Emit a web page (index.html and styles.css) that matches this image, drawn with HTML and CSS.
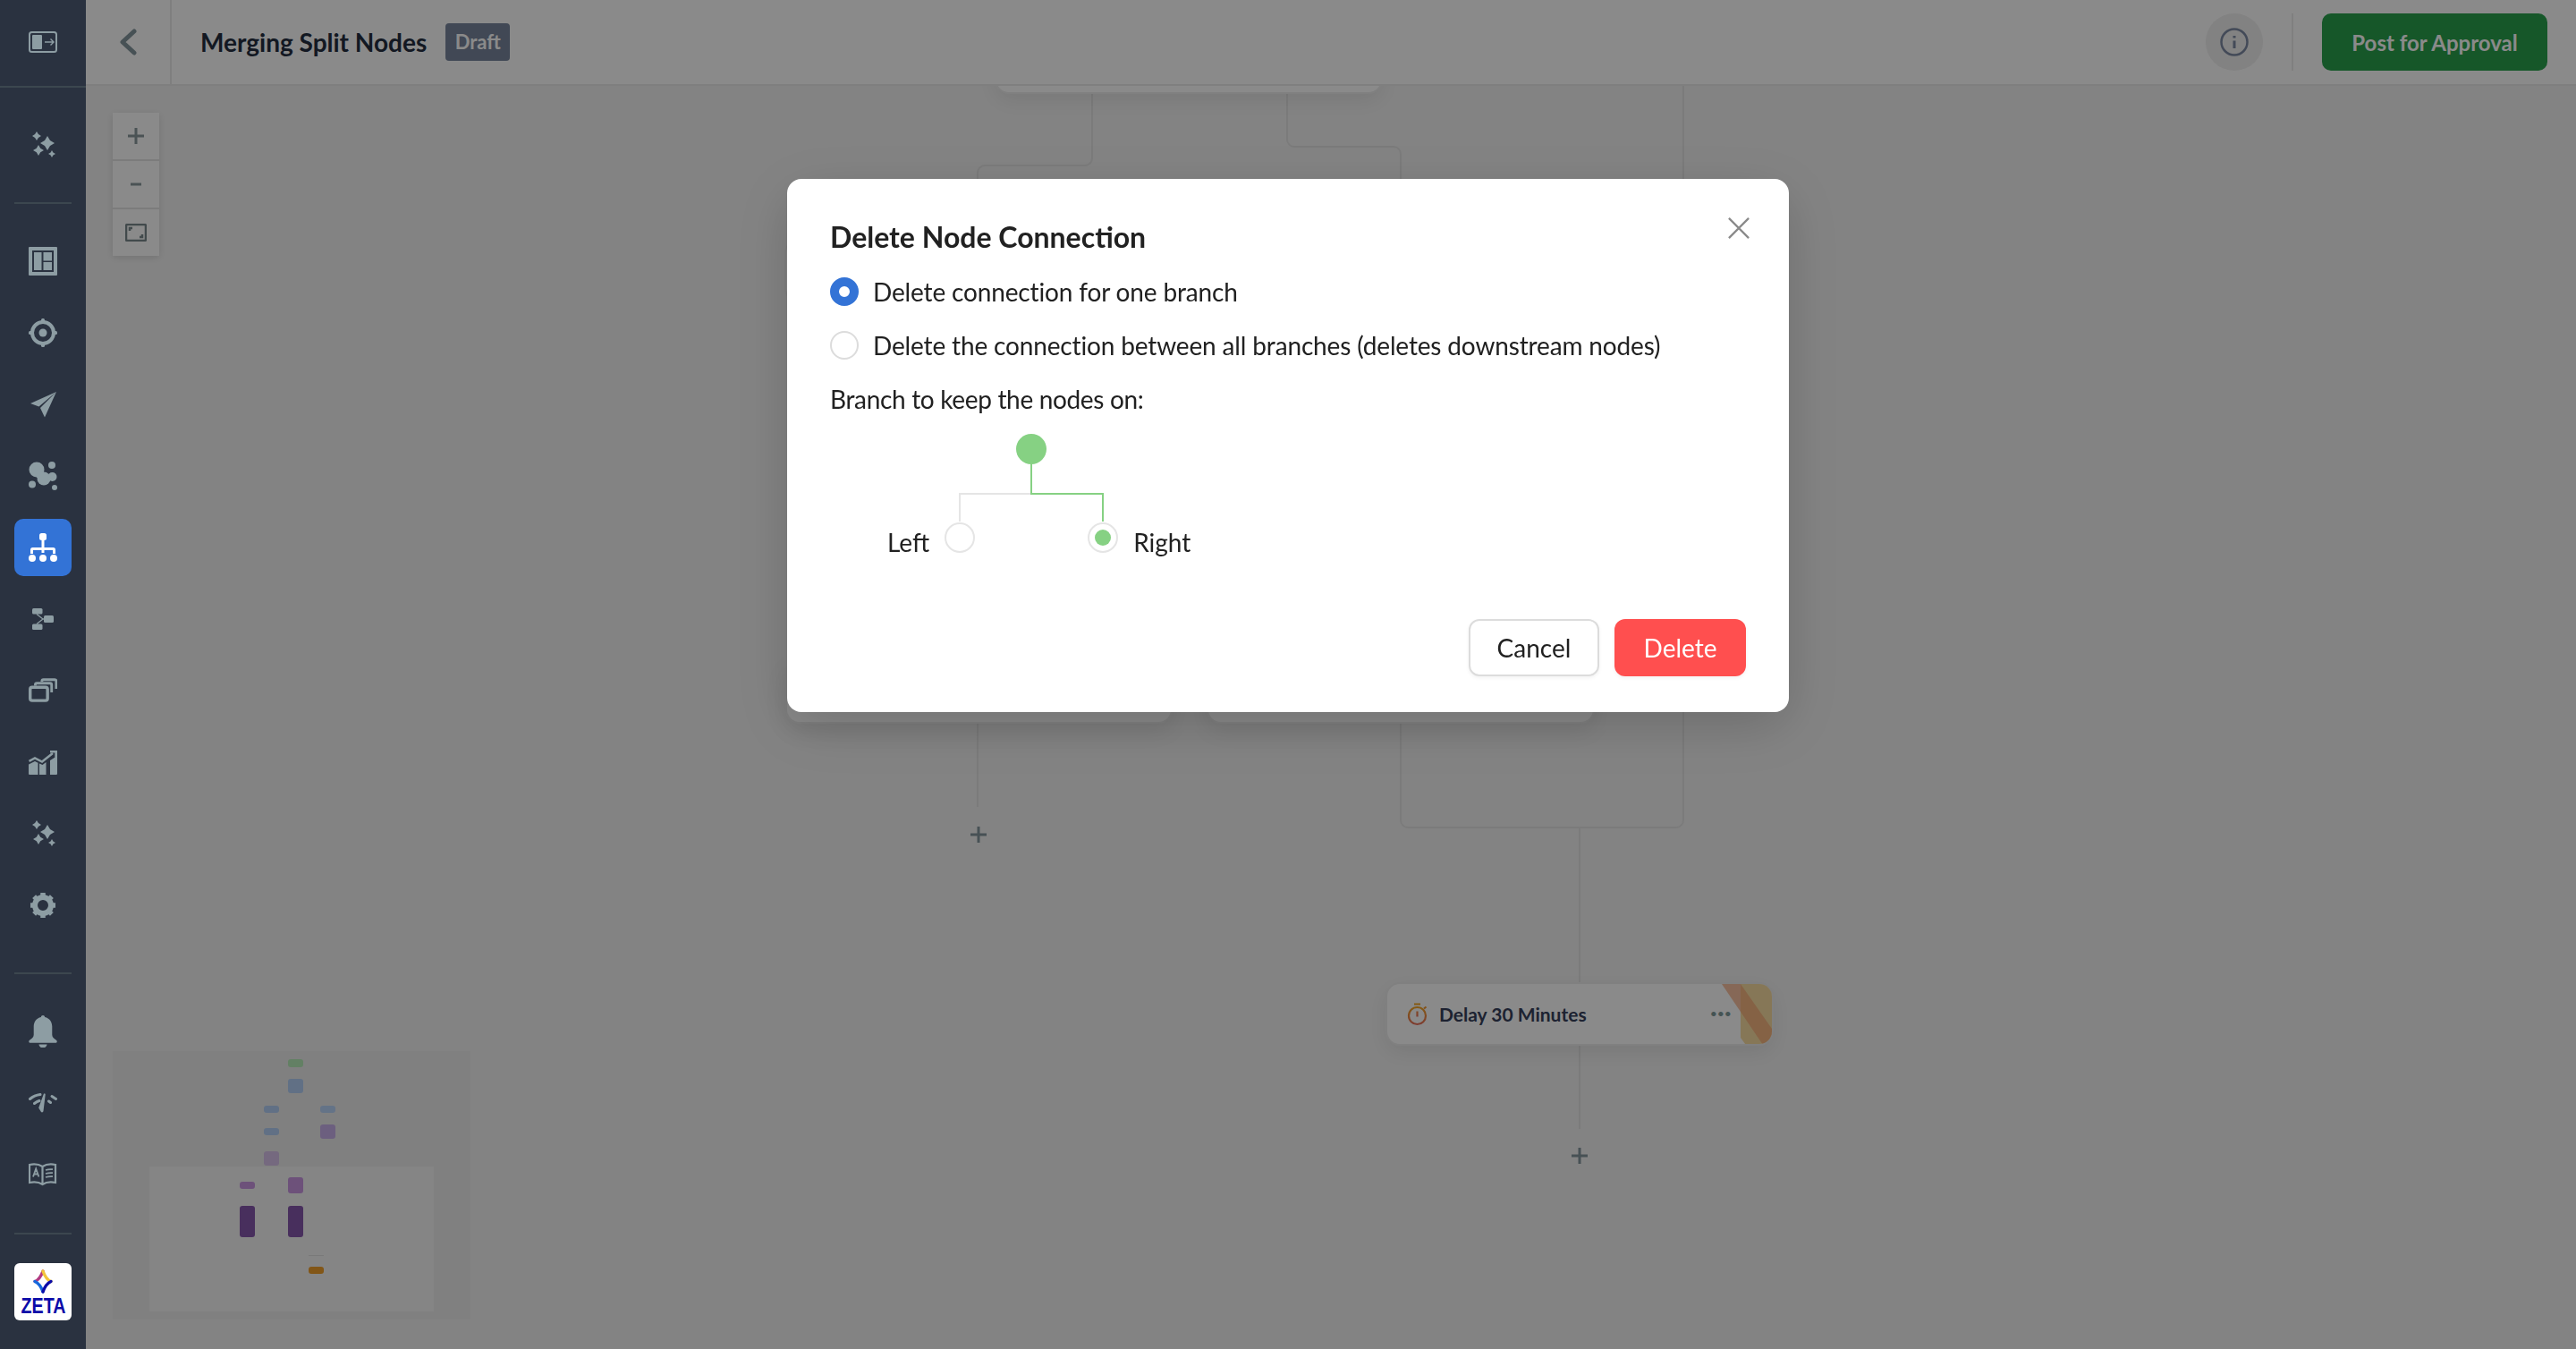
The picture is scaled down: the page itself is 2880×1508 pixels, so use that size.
FILE: index.html
```html
<!DOCTYPE html>
<html lang="en">

<head>
    <meta charset="UTF-8">
    <meta name="viewport" content="width=device-width, initial-scale=1.0">
    <title>Merging Split Nodes</title>
    <link rel="stylesheet" href="styles.css">
</head>

<body>
    <div class="app">
        <aside class="sidebar">
            <div class="side-top">
                <svg class="icon" viewBox="0 0 32 24"><rect class="line" x="1" y="1" width="30" height="22" rx="2.5" stroke-width="2"/><rect x="4" y="4" width="11" height="16" rx="1"/><path class="line" stroke-width="1.4" d="M18 12h10M24.500 8.500 28 12l-3.500 3.500"/></svg>
            </div>
            <div class="side-item side-first">
                <svg class="icon" viewBox="0 0 32 32"><path d="M21 6l3 5 5 3-5 3-3 5-3-5-5-3 5-3ZM9 1l1.900 3.100L14 6l-3.100 1.900L9 11 7.100 7.900 4 6l3.100-1.900ZM11 16l2.200 3.800L17 22l-3.800 2.200L11 28l-2.200-3.800L5 22l3.800-2.200ZM26 22l1.400 2.600L30 26l-2.600 1.400L26 30l-1.400-2.600L22 26l2.600-1.400Z"/></svg>
            </div>
            <div class="side-rule"></div>
            <nav class="side-group">
                <div class="side-item">
                    <svg class="icon" viewBox="0 0 32 32"><path fill-rule="evenodd" d="M1 0h30a1 1 0 0 1 1 1v30a1 1 0 0 1-1 1H1a1 1 0 0 1-1-1V1a1 1 0 0 1 1-1Zm3 4v24h24V4H4Z"/><rect x="6" y="6" width="8.500" height="20"/><rect x="16.500" y="6" width="9.500" height="9.500"/><rect x="16.500" y="17" width="9.500" height="9"/></svg>
                </div>
                <div class="side-item">
                    <svg class="icon" viewBox="0 0 32 32"><circle class="line" cx="16" cy="16" r="12" stroke-width="4"/><circle cx="16" cy="16" r="4.500"/><rect x="14" y="0" width="4" height="5" rx="1.500"/><rect x="14" y="27" width="4" height="5" rx="1.500"/><rect x="0" y="14" width="5" height="4" rx="1.500"/><rect x="27" y="14" width="5" height="4" rx="1.500"/></svg>
                </div>
                <div class="side-item">
                    <svg class="icon" viewBox="0 0 32 32"><path d="M31 2 2 15l9.500 3.500ZM31 2 13 20l5 10.500Z"/></svg>
                </div>
                <div class="side-item">
                    <svg class="icon" viewBox="0 0 32 32"><circle cx="9" cy="9" r="8.500"/><circle cx="17" cy="19" r="7.500"/><circle cx="26.500" cy="17" r="5"/><path d="M9 12h8v6H9Z"/><circle cx="26" cy="4" r="4"/><circle cx="4" cy="25.500" r="4"/><circle cx="29" cy="29" r="3"/></svg>
                </div>
                <div class="side-item side-active">
                    <svg class="icon" viewBox="0 0 32 32"><rect x="12" y="0" width="8" height="8" rx="2.500"/><path class="line" stroke-width="3" d="M16 8v14M3.500 23v-4.500a1 1 0 0 1 1-1h23a1 1 0 0 1 1 1V23"/><circle cx="4" cy="28" r="4"/><circle cx="16" cy="28" r="4"/><circle cx="28" cy="28" r="4"/></svg>
                </div>
                <div class="side-item">
                    <svg class="icon icon-sm" viewBox="0 0 24 24"><rect x="0" y="0" width="11.500" height="6.500" rx="1.500"/><rect x="13" y="8" width="11" height="8" rx="1.500"/><rect x="0" y="17.500" width="11.500" height="6.500" rx="1.500"/><path class="line" stroke-width="1.300" d="M5 6.500 12 12l-7 5.500M12 12h2"/></svg>
                </div>
                <div class="side-item">
                    <svg class="icon" viewBox="0 0 28 24"><path class="line" stroke-width="2.500" d="M13 3.500V3a1.500 1.500 0 0 1 1.500-1.500h11A1.500 1.500 0 0 1 27 3v7.500"/><path class="line" stroke-width="2.500" d="M6.500 7.500V6.500A1.500 1.500 0 0 1 8 5h13a1.500 1.500 0 0 1 1.500 1.500V14"/><rect class="line" x="1.500" y="9" width="17" height="13" rx="2" stroke-width="3"/></svg>
                </div>
                <div class="side-item">
                    <svg class="icon" viewBox="0 0 32 28"><path class="line" stroke-width="2.500" d="M0.500 13 7 9.500 15 13.500 27 4"/><path d="M24 1h8v8l-2.700-.2V3.500H24Z"/><path d="M0 16.500l7-3.500 3.500 1.700V28H1a1 1 0 0 1-1-1ZM12 15.500l3.500 1.500 4-3V28H12ZM24 12l8-5v20a1 1 0 0 1-1 1h-7Z"/></svg>
                </div>
                <div class="side-item">
                    <svg class="icon" viewBox="0 0 32 32"><path d="M21 6l3 5 5 3-5 3-3 5-3-5-5-3 5-3ZM9 1l1.900 3.100L14 6l-3.100 1.900L9 11 7.100 7.900 4 6l3.100-1.900ZM11 16l2.200 3.800L17 22l-3.800 2.200L11 28l-2.200-3.800L5 22l3.800-2.200ZM26 22l1.400 2.600L30 26l-2.600 1.400L26 30l-1.400-2.600L22 26l2.600-1.400Z"/></svg>
                </div>
                <div class="side-item">
                    <svg class="icon" viewBox="0 0 32 32"><circle class="line" cx="16" cy="16" r="9" stroke-width="6"/><path class="line" stroke-width="5.500" d="M16 2v5M16 25v5M2 16h5M25 16h5M6.100 6.100l3.500 3.500M22.400 22.400l3.500 3.500M25.900 6.100l-3.500 3.500M9.600 22.400l-3.500 3.500"/></svg>
                </div>
            </nav>
            <div class="side-rule side-rule-low"></div>
            <nav class="side-group">
                <div class="side-item">
                    <svg class="icon" viewBox="0 0 28 32"><path d="M14 0c1 0 1.800.8 1.900 1.700C20.500 2.700 23 6.500 23 11v8c0 2.300 1.700 3.800 3.800 5 1.500.8 1.300 3-.8 3H2c-2.100 0-2.300-2.200-.8-3C3.300 22.800 5 21.300 5 19v-8c0-4.500 2.500-8.300 7.100-9.300C12.200.8 13 0 14 0ZM10 28.500h8c-.3 2-2 3.500-4 3.500s-3.700-1.500-4-3.500Z"/></svg>
                </div>
                <div class="side-item">
                    <svg class="icon" viewBox="0 0 32 24"><path class="line" stroke-width="3" stroke-linecap="round" d="M1.500 7.500C5 4.500 9 3 13 2.500M6.500 12.500C8.500 11 10.500 10 12 9.500M30.500 7.500 26 4.500M24.500 11.500 22.500 10"/><path d="M17 1.500c1.200-.3 1.800.2 1.700 1.200L16.500 21c-.2 1.500-1.800 2-2.700.8L11.500 18c-.4-.8-.3-1.500.2-2.100Z"/></svg>
                </div>
                <div class="side-item">
                    <svg class="icon" viewBox="0 0 32 26"><path class="line" stroke-width="2.200" d="M15.500 4C12 1.800 6 1 1 2v20c5-1 11-.3 14.500 2 3.500-2.300 9.500-3 14.500-2V2c-5-1-11-.2-14.500 2Zm0 0v20"/><path class="line" stroke-width="1.800" d="M5 15.500 8.200 6.500l3.200 9M6.200 12.500h4M19 8c2.500-.8 5-1 8-.8M19 12c2.500-.8 5-1 8-.8M19 16c2.500-.8 5-1 8-.8"/></svg>
                </div>
            </nav>
            <div class="side-rule side-rule-logo"></div>
            <div class="logo-tile">
                <svg class="logo-mark" viewBox="0 0 24 28"><g fill="none" stroke-width="3.400" stroke-linecap="round"><path stroke="#b23a82" d="M3 13.500C7 12 10 7.500 12 2"/><path stroke="#f3c43a" d="M12 2c2 5.500 5 10 9 11.500"/><path stroke="#1668dc" d="M3 13.500c4.500 2 7 6 9 11.500"/><path stroke="#0b0ba8" d="M21 13.500c-4.500 2-7 6-9 11.500"/></g></svg>
                <span class="logo-text">ZETA</span>
            </div>
        </aside>

        <main class="main">
            <header class="topbar">
                <div class="back">
                    <svg class="back-icon" viewBox="0 0 20 30"><path d="M17 3 4 15l13 12" fill="none" stroke-width="5" stroke-linecap="round" stroke-linejoin="round"/></svg>
                </div>
                <h1 class="flow-name">Merging Split Nodes</h1>
                <span class="status">Draft</span>
                <div class="topbar-right">
                    <div class="info">
                        <svg class="info-icon" viewBox="0 0 32 32"><circle cx="16" cy="16" r="14.500" fill="none" stroke-width="2.500"/><path d="M16 14.500v8.500M16 9v2.500" fill="none" stroke-width="3"/></svg>
                    </div>
                    <div class="topbar-rule"></div>
                    <button class="post-btn">Post for Approval</button>
                </div>
            </header>

            <section class="canvas">
                <svg class="links" viewBox="96 96 2784 1412">
                    <path d="M1221 100v77a8 8 0 0 1-8 8h-112a8 8 0 0 0-8 8v620M1093 809v93"/>
                    <path d="M1439 100v56a8 8 0 0 0 8 8h111a8 8 0 0 1 8 8v745a8 8 0 0 0 8 8h300a8 8 0 0 0 8-8V96"/>
                    <path d="M1766 925v173M1766 1169v93"/>
                </svg>

                <div class="node node-top"></div>
                <div class="node node-mid"></div>
                <div class="node node-left"></div>
                <div class="node node-right"></div>

                <div class="node node-delay">
                    <svg class="timer" viewBox="0 0 24 26"><defs><linearGradient id="timerGrad" x1="0" y1="0" x2="0" y2="1"><stop offset="0" stop-color="#f5a623"/><stop offset="1" stop-color="#e8705a"/></linearGradient></defs><g fill="none" stroke="url(#timerGrad)" stroke-width="2.200"><circle cx="11.500" cy="14.500" r="9.500"/><path d="M8 1.500h7M11.500 9.500v6M19 6.500l2.500-2"/></g></svg>
                    <span class="node-label">Delay 30 Minutes</span>
                    <span class="node-more">•••</span>
                    <svg class="ribbon" viewBox="0 0 56 71"><path fill="#f5cf7a" fill-opacity=".7" d="M21 0h35v71H29l-8-11Z"/><path fill="#f3a06e" fill-opacity=".65" d="M0 0h21l35 50v21h-8Z"/></svg>
                </div>

                <svg class="plus plus-left" viewBox="0 0 18 18"><path d="M9 0v18M0 9h18"/></svg>
                <svg class="plus plus-right" viewBox="0 0 18 18"><path d="M9 0v18M0 9h18"/></svg>

                <div class="zoom-tools">
                    <div class="zoom-cell"><svg class="zoom-icon" viewBox="0 0 20 20"><path d="M10 1v18M1 10h18"/></svg></div>
                    <div class="zoom-cell"><svg class="zoom-icon" viewBox="0 0 20 20"><path d="M4 10h12"/></svg></div>
                    <div class="zoom-cell"><svg class="fit-icon" viewBox="0 0 24 20"><rect x="1" y="1" width="22" height="18" rx="1.500" fill="none"/><path d="M5 8V5h3M19 12v3h-3" fill="none"/></svg></div>
                </div>

                <svg class="minimap" viewBox="0 0 400 300">
                    <rect x="41" y="129" width="318" height="162" fill="#f6f6f6"/>
                    <rect x="196" y="9" width="17" height="9" rx="3" fill="#b8ecba"/>
                    <rect x="196" y="31" width="17" height="16" rx="3" fill="#b4d0f6"/>
                    <rect x="169" y="61" width="17" height="8" rx="3" fill="#b4d0f6"/>
                    <rect x="232" y="61" width="17" height="8" rx="3" fill="#bad4fa"/>
                    <rect x="169" y="86" width="17" height="8" rx="3" fill="#b4d0f6"/>
                    <rect x="232" y="82" width="17" height="16" rx="3" fill="#c8b0ea"/>
                    <rect x="169" y="112" width="17" height="16" rx="3" fill="#d8c2ea"/>
                    <rect x="142" y="146" width="17" height="8" rx="3" fill="#c997e2"/>
                    <rect x="196" y="141" width="17" height="18" rx="3" fill="#c997e2"/>
                    <rect x="142" y="173" width="17" height="35" rx="3" fill="#8558ad"/>
                    <rect x="196" y="173" width="17" height="35" rx="3" fill="#8558ad"/>
                    <rect x="219" y="228" width="17" height="1" fill="#e0e0e0"/>
                    <rect x="219" y="241" width="17" height="8" rx="3" fill="#f0a02c"/>
                </svg>
            </section>
        </main>
    </div>

    <div class="overlay">
        <div class="modal">
            <h2 class="modal-title">Delete Node Connection</h2>
            <svg class="modal-close" viewBox="0 0 26 26"><path d="M1 1l24 24M25 1 1 25"/></svg>
            <label class="option"><span class="radio radio-on"></span>Delete connection for one branch</label>
            <label class="option"><span class="radio"></span>Delete the connection between all branches (deletes downstream nodes)</label>
            <p class="branch-label">Branch to keep the nodes on:</p>
            <div class="branch-tree">
                <span class="tree-left">Left</span>
                <svg class="tree-svg" viewBox="0 0 202 143">
                    <path d="M21 99V68h80" fill="none" stroke="#e5e5e5" stroke-width="2"/>
                    <path d="M101 32v36h80v31" fill="none" stroke="#86d183" stroke-width="2"/>
                    <circle cx="101" cy="18" r="17" fill="#86d183"/>
                    <circle cx="21" cy="117" r="16" fill="#fff" stroke="#e5e5e5" stroke-width="2"/>
                    <circle cx="181" cy="117" r="16" fill="#fff" stroke="#e5e5e5" stroke-width="2"/>
                    <circle cx="181" cy="117" r="9" fill="#86d183"/>
                </svg>
                <span class="tree-right">Right</span>
            </div>
            <div class="modal-actions">
                <button class="btn btn-cancel">Cancel</button>
                <button class="btn btn-delete">Delete</button>
            </div>
        </div>
    </div>
</body>

</html>
```

FILE: styles.css
```css
* {
    margin: 0;
    padding: 0;
    box-sizing: border-box;
    font-family: 'Lato', 'Liberation Sans', sans-serif;
}

html,
body {
    height: 100%;
    overflow: hidden;
}

.app {
    display: flex;
    height: 1508px;
}

/* sidebar stays above the dimmed layer */
.sidebar {
    position: relative;
    z-index: 20;
    flex: 0 0 96px;
    display: flex;
    flex-direction: column;
    align-items: center;
    background: #2a3240;
}

.side-top {
    flex: 0 0 98px;
    width: 100%;
    display: flex;
    align-items: center;
    justify-content: center;
    padding-bottom: 2px;
    border-bottom: 2px solid #3c474f;
}

.side-first {
    margin-top: 32px;
}

.side-item {
    width: 64px;
    height: 64px;
    flex: none;
    display: flex;
    align-items: center;
    justify-content: center;
    border-radius: 10px;
}

.side-group {
    display: flex;
    flex-direction: column;
    gap: 16px;
}

.side-rule {
    flex: none;
    width: 64px;
    height: 2px;
    margin: 32px 0;
    background: #3c474f;
}

.side-rule-low {
    margin-top: 43px;
}

.side-rule-logo {
    margin-top: 33px;
}

.icon {
    width: 32px;
    fill: #8d9da3;
}

.icon-sm {
    width: 24px;
}

.icon .line {
    fill: none;
    stroke: #8d9da3;
}

.side-active {
    background: #3373d6;
}

.side-active .icon {
    fill: #fff;
}

.side-active .icon .line {
    stroke: #fff;
}

.logo-tile {
    flex: none;
    width: 64px;
    height: 64px;
    display: flex;
    flex-direction: column;
    align-items: center;
    padding-top: 7px;
    background: #fff;
    border-radius: 6px;
}

.logo-mark {
    width: 24px;
    height: 28px;
}

.logo-text {
    font-family: 'Liberation Sans', sans-serif;
    font-size: 24px;
    font-weight: bold;
    line-height: 20px;
    margin-top: 3px;
    color: #0b0ba8;
    transform: scaleX(.82);
}

.main {
    flex: 1;
    display: flex;
    flex-direction: column;
    min-width: 0;
}

.topbar {
    position: relative;
    z-index: 2;
    flex: 0 0 96px;
    display: flex;
    align-items: center;
    background: #fff;
    border-bottom: 2px solid #eaeaea;
}

.back {
    flex: 0 0 96px;
    height: 94px;
    display: flex;
    align-items: center;
    justify-content: center;
    border-right: 2px solid #eaeaea;
}

.back-icon {
    width: 20px;
    height: 30px;
    stroke: #84979d;
}

.flow-name {
    margin-left: 32px;
    font-size: 28px;
    font-weight: bold;
    color: #242e40;
}

.status {
    margin-left: 21px;
    width: 72px;
    height: 42px;
    line-height: 42px;
    text-align: center;
    font-size: 22px;
    font-weight: bold;
    color: #fff;
    background: #78869d;
    border-radius: 4px;
}

.topbar-right {
    margin-left: auto;
    margin-right: 32px;
    display: flex;
    align-items: center;
}

.info {
    width: 64px;
    height: 64px;
    display: flex;
    align-items: center;
    justify-content: center;
    background: #f0f0f0;
    border-radius: 50%;
}

.info-icon {
    width: 32px;
    height: 32px;
    stroke: #7d8aa3;
}

.topbar-rule {
    width: 2px;
    height: 64px;
    margin: 0 32px;
    background: #eaeaea;
}

.post-btn {
    width: 252px;
    height: 64px;
    font-size: 24px;
    font-weight: bold;
    color: #fff;
    background: #29a14d;
    border: none;
    border-radius: 10px;
}

.canvas {
    position: relative;
    flex: 1;
    overflow: hidden;
    background: #f3f3f3;
}

/* free canvas: connectors and nodes are placed by coordinate */
.links {
    position: absolute;
    left: 0;
    top: 0;
    width: 2784px;
    height: 1412px;
    fill: none;
    stroke: #e4e4e4;
    stroke-width: 2;
}

.node {
    position: absolute;
    height: 71px;
    background: #fff;
    border: 2px solid #ececec;
    border-radius: 16px;
    box-shadow: 0 8px 24px rgba(0, 0, 0, 0.08);
}

.node-top {
    left: 1016px;
    top: -62px;
    width: 434px;
}

.node-mid {
    left: 781px;
    top: 171px;
    width: 434px;
    box-shadow: none;
}

.node-left {
    left: 782px;
    top: 642px;
    width: 433px;
}

.node-right {
    left: 1253px;
    top: 642px;
    width: 434px;
}

.node-delay {
    left: 1453px;
    top: 1002px;
    width: 434px;
    display: flex;
    align-items: center;
    padding-left: 22px;
    overflow: hidden;
}

.timer {
    width: 24px;
    height: 26px;
}

.node-label {
    margin-left: 12px;
    font-size: 21px;
    font-weight: bold;
    color: #363f5b;
}

.node-more {
    position: absolute;
    right: 45px;
    top: 24px;
    font-size: 14px;
    color: #7f9a9a;
}

.ribbon {
    position: absolute;
    right: 0;
    top: 0;
    width: 56px;
    height: 71px;
}

.plus {
    position: absolute;
    width: 18px;
    height: 18px;
    fill: none;
    stroke: #84979d;
    stroke-width: 3;
}

.plus-left {
    left: 989px;
    top: 828px;
}

.plus-right {
    left: 1661px;
    top: 1187px;
}

.zoom-tools {
    position: absolute;
    left: 30px;
    top: 30px;
    display: flex;
    flex-direction: column;
    gap: 2px;
    background: #e6e6e6;
    box-shadow: 0 2px 8px rgba(0, 0, 0, 0.12);
}

.zoom-cell {
    width: 52px;
    height: 52px;
    display: flex;
    align-items: center;
    justify-content: center;
    background: #fff;
}

.zoom-icon {
    width: 20px;
    height: 20px;
    fill: none;
    stroke: #8b9a9e;
    stroke-width: 3;
}

.fit-icon {
    width: 24px;
    height: 20px;
    stroke: #7a8a8c;
    stroke-width: 2.500;
}

.minimap {
    position: absolute;
    left: 30px;
    top: 1079px;
    width: 400px;
    height: 300px;
    background: #ededed;
}

/* dim layer and dialog */
.overlay {
    position: fixed;
    inset: 0;
    z-index: 10;
    display: flex;
    justify-content: center;
    align-items: flex-start;
    padding-top: 200px;
    background: rgba(0, 0, 0, 0.46);
}

.modal {
    position: relative;
    width: 1120px;
    height: 596px;
    padding: 45px 48px 40px;
    background: #fff;
    border-radius: 16px;
    box-shadow: 0 16px 64px rgba(0, 0, 0, 0.18);
    color: #212121;
}

.modal-title {
    font-size: 32px;
    font-weight: bold;
    line-height: 40px;
    margin-bottom: 21px;
}

.modal-close {
    position: absolute;
    right: 44px;
    top: 43px;
    width: 24px;
    height: 24px;
    fill: none;
    stroke: #8a8a8a;
    stroke-width: 2.500;
}

.option {
    display: flex;
    align-items: center;
    gap: 16px;
    font-size: 28px;
    line-height: 40px;
    letter-spacing: -0.15px;
    margin-bottom: 20px;
}

.radio {
    flex: none;
    width: 32px;
    height: 32px;
    background: #fff;
    border: 2px solid #dcdcdc;
    border-radius: 50%;
}

.radio-on {
    border: 10px solid #3373d6;
}

.branch-label {
    font-size: 28px;
    line-height: 40px;
    letter-spacing: -0.33px;
}

.branch-tree {
    display: flex;
    align-items: flex-end;
    margin: 18px 0 0 64px;
    font-size: 28px;
    line-height: 40px;
}

.tree-left,
.tree-right {
    margin-bottom: 1px;
}

.tree-svg {
    width: 202px;
    height: 143px;
    margin: 0 13px 0 13px;
}

.modal-actions {
    display: flex;
    justify-content: flex-end;
    gap: 17px;
    margin-top: 65px;
}

.btn {
    width: 146px;
    height: 64px;
    font-size: 28px;
    border-radius: 12px;
    box-shadow: 0 2px 4px rgba(0, 0, 0, 0.05);
}

.btn-cancel {
    color: #212121;
    background: #fff;
    border: 2px solid #dcdcdc;
}

.btn-delete {
    width: 147px;
    color: #fff;
    background: #ff4f4f;
    border: none;
}
```
